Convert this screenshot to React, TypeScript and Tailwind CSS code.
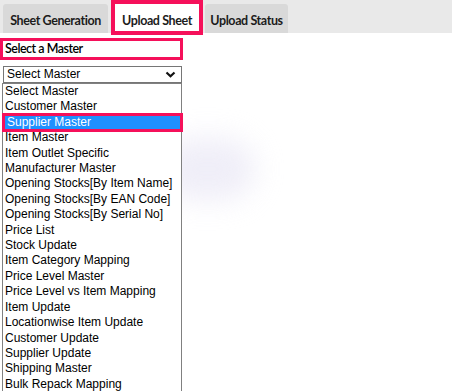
import React from "react";

const items = [
  "Select Master",
  "Customer Master",
  "Supplier Master",
  "Item Master",
  "Item Outlet Specific",
  "Manufacturer Master",
  "Opening Stocks[By Item Name]",
  "Opening Stocks[By EAN Code]",
  "Opening Stocks[By Serial No]",
  "Price List",
  "Stock Update",
  "Item Category Mapping",
  "Price Level Master",
  "Price Level vs Item Mapping",
  "Item Update",
  "Locationwise Item Update",
  "Customer Update",
  "Supplier Update",
  "Shipping Master",
  "Bulk Repack Mapping",
];

export default function App() {
  return (
    <div className="relative w-[452px] h-[391px] overflow-hidden bg-white" style={{ fontFamily: "Lato, 'Noto Sans', sans-serif" }}>
      <div className="absolute left-[160px] top-[138px] w-[95px] h-[62px] rounded-full bg-[#e9e7f5] blur-[14px] opacity-70" />
      <div className="relative h-[33px] bg-[#e9e9e9] flex items-start pl-[3px] text-[12.5px] font-bold text-[#1c1c1c] tracking-[-0.4px]">
        <div className="mt-[4px] h-[29px] w-[105px] bg-[#d9d9d9] rounded-t-[3px] flex items-center justify-center pt-[6px]">Sheet Generation</div>
        <div className="ml-[3px] h-[35px] w-[92px] border-[4px] border-[#f5105a] bg-white flex items-center justify-center relative z-10 pt-[7px]">Upload Sheet</div>
        <div className="ml-[2px] mt-[4px] h-[29px] w-[83px] bg-[#d9d9d9] rounded-t-[3px] flex items-center justify-center pt-[6px]">Upload Status</div>
      </div>
      <div className="relative mt-[5px] w-[183px] h-[22px] border-[3px] border-[#f5105a] flex items-center pl-[2px] pt-[1px] text-[12.5px] font-semibold text-black tracking-[-0.5px]">Select a Master</div>
      <div className="relative" style={{ fontFamily: "'Liberation Sans', Arial, sans-serif" }}>
        <div className="mt-[6px] ml-[3px] w-[179px] h-[17px] border border-[#767676] flex items-center justify-between pl-[3px] pr-[5px] text-[12px] text-black bg-white">
          <span className="leading-[15px]">Select Master</span>
          <svg width="11" height="7" viewBox="0 0 11 7">
            <path d="M1.5 1.5 L5.5 5.2 L9.5 1.5" fill="none" stroke="#111" strokeWidth="2.2" />
          </svg>
        </div>
        <div className="ml-[2px] w-[180px] h-[320px] border border-b-0 border-[#808080] bg-white text-[12px] text-black">
          {items.map((it, i) =>
            i === 2 ? (
              <div key={it} className="relative h-[15.42px] -mx-[1px] z-10">
                <div className="absolute left-0 right-[-1px] top-[-2px] bottom-[-2px] border-[3px] border-[#f5105a] bg-[#1e90ff] text-white leading-[13px] pl-[2px] whitespace-nowrap">{it}</div>
              </div>
            ) : (
              <div key={it} className="h-[15.42px] leading-[15.42px] pl-[2px] whitespace-nowrap">{it}</div>
            )
          )}
        </div>
      </div>
    </div>
  );
}
